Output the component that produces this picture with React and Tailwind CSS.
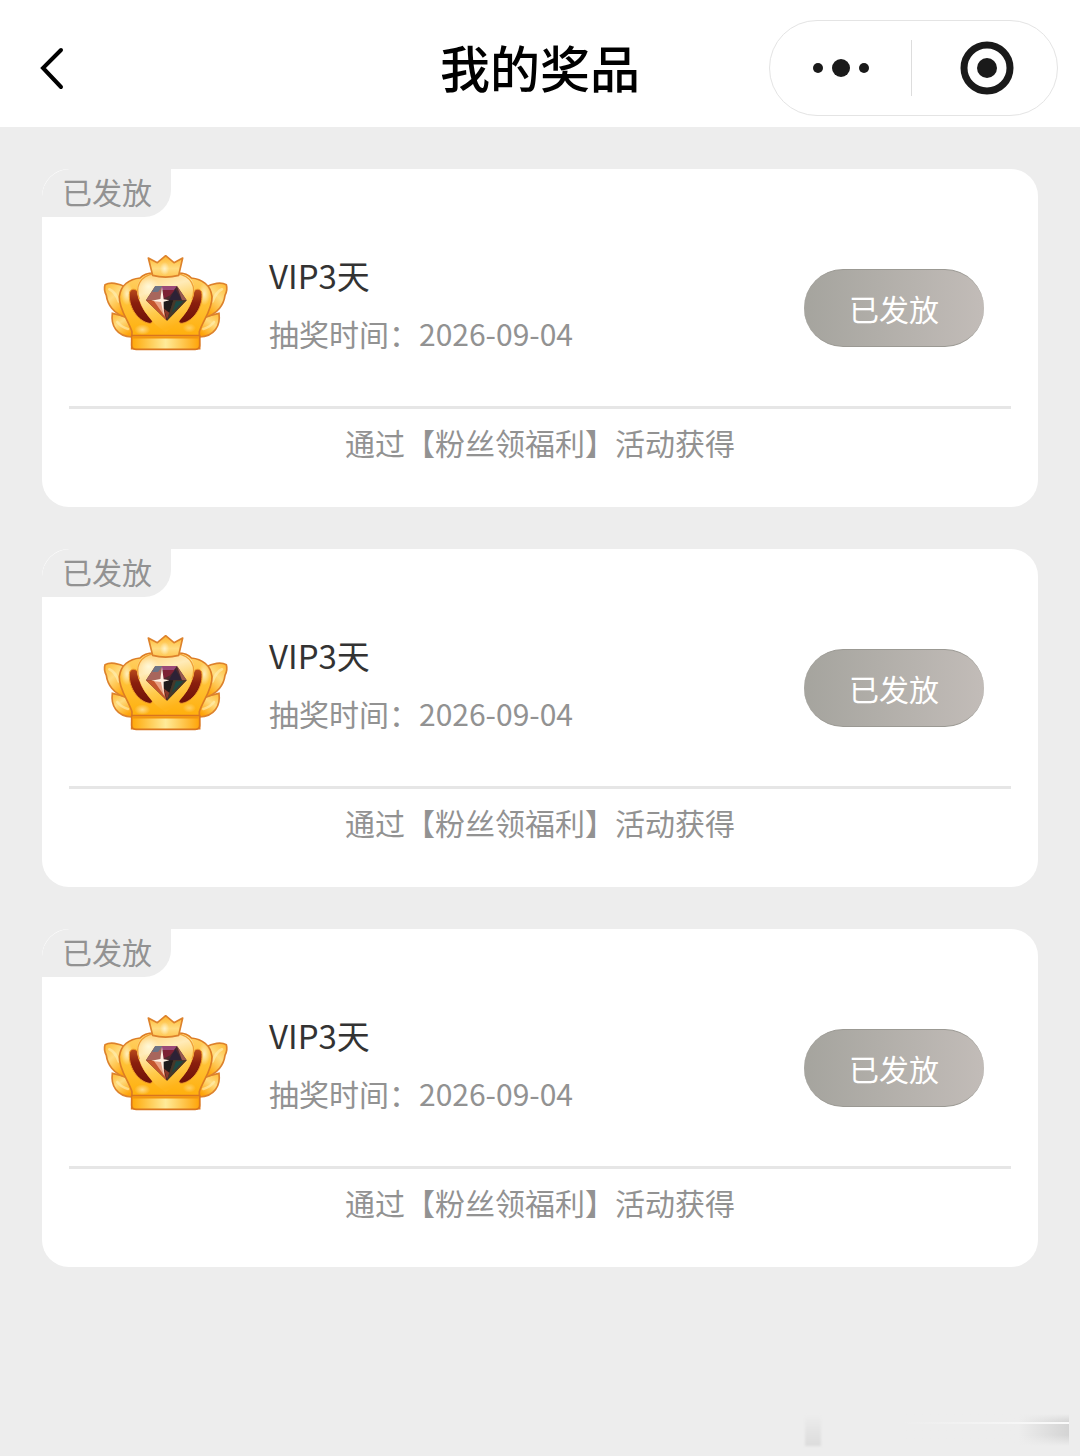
import React from "react";

const prizes = [
  { id: 1, name: "VIP3天", date: "2026-09-04", status: "已发放", source: "粉丝领福利" },
  { id: 2, name: "VIP3天", date: "2026-09-04", status: "已发放", source: "粉丝领福利" },
  { id: 3, name: "VIP3天", date: "2026-09-04", status: "已发放", source: "粉丝领福利" },
];

function CrownDefs() {
  return (
    <svg className="absolute h-0 w-0" aria-hidden="true">
      <defs>
        <linearGradient id="wing" x1="0" y1="0" x2="0.6" y2="1">
          <stop offset="0" stopColor="#ffb930" />
          <stop offset="0.45" stopColor="#ffdc80" />
          <stop offset="1" stopColor="#ffa408" />
        </linearGradient>
        <linearGradient id="tip" x1="0" y1="0" x2="0" y2="1">
          <stop offset="0" stopColor="#ffb62c" />
          <stop offset="0.6" stopColor="#ffdc80" />
          <stop offset="1" stopColor="#ffc650" />
        </linearGradient>
        <linearGradient id="body" x1="0" y1="0" x2="0" y2="1">
          <stop offset="0" stopColor="#ffd068" />
          <stop offset="0.4" stopColor="#ffc236" />
          <stop offset="0.8" stopColor="#ffb00f" />
          <stop offset="1" stopColor="#ffa90a" />
        </linearGradient>
        <linearGradient id="heart" x1="0" y1="0" x2="0.3" y2="1">
          <stop offset="0" stopColor="#ffcf70" />
          <stop offset="0.35" stopColor="#ffebb8" />
          <stop offset="0.7" stopColor="#ffcb4c" />
          <stop offset="1" stopColor="#ffb41a" />
        </linearGradient>
        <linearGradient id="base" x1="0" y1="0" x2="1" y2="0">
          <stop offset="0" stopColor="#ffa807" />
          <stop offset="0.5" stopColor="#ffeb98" />
          <stop offset="1" stopColor="#ffa407" />
        </linearGradient>
        <linearGradient id="slot" x1="0" y1="0" x2="0" y2="1">
          <stop offset="0" stopColor="#b84a1c" />
          <stop offset="0.4" stopColor="#8a1f0d" />
          <stop offset="1" stopColor="#6e1208" />
        </linearGradient>
        <radialGradient id="glow">
          <stop offset="0" stopColor="#fff8d8" />
          <stop offset="1" stopColor="#fff8d8" stopOpacity="0" />
        </radialGradient>
      </defs>
    </svg>
  );
}

function Wing() {
  return (
    <>
      <path d="M67 220 C62 256 80 290 126 291 L130 235 Z" fill="url(#wing)" stroke="#dd822c" strokeWidth="5" />
      <path d="M45 134 C60 126 86 129 108 142 L114 234 C68 222 52 190 49 166 C43 154 42 144 45 134 Z" fill="url(#wing)" stroke="#dd822c" strokeWidth="5" strokeLinejoin="round" />
      <path d="M58 148 C72 154 80 168 86 184" fill="none" stroke="#fff0b8" strokeWidth="8" strokeLinecap="round" opacity="0.6" />
      <path d="M82 246 C90 256 102 264 114 267" fill="none" stroke="#fff0b4" strokeWidth="8" strokeLinecap="round" opacity="0.6" />
    </>
  );
}

function Slot() {
  return (
    <path d="M119 156 C112 196 142 244 178 250 C187 250 190 243 185 236 C162 216 149 192 143 156 C139 146 124 144 119 156 Z" fill="url(#slot)" stroke="#ef9a28" strokeWidth="3" />
  );
}

function Crown() {
  return (
    <svg className="h-24 w-32 shrink-0" viewBox="36 45 384 288" role="img" aria-label="VIP皇冠">
      <Wing />
      <g transform="translate(454 0) scale(-1 1)"><Wing /></g>
      <path d="M125 326 L126 276 C118 246 86 208 88 170 C92 136 118 117 150 114 C158 105 174 99 192 99 L263 99 C281 99 297 105 304 114 C336 117 362 136 366 170 C368 208 336 246 328 276 L329 326 Z" fill="url(#body)" stroke="#dc7c24" strokeWidth="5" />
      <ellipse cx="111" cy="162" rx="18" ry="34" fill="url(#glow)" opacity="0.8" />
      <ellipse cx="343" cy="162" rx="18" ry="34" fill="url(#glow)" opacity="0.8" />
      <Slot />
      <g transform="translate(454 0) scale(-1 1)"><Slot /></g>
      <path d="M227 276 C188 254 154 212 142 160 C136 118 165 101 193 101 L262 101 C290 101 318 118 312 160 C300 212 266 254 227 276 Z" fill="url(#heart)" />
      <path d="M148 178 C134 140 150 108 192 101 M306 178 C320 140 304 108 262 101" fill="none" stroke="#f0a034" strokeWidth="4" />
      <ellipse cx="176" cy="140" rx="30" ry="28" fill="url(#glow)" />
      <ellipse cx="157" cy="269" rx="24" ry="16" fill="url(#glow)" opacity="0.6" />
      <ellipse cx="298" cy="264" rx="20" ry="14" fill="url(#glow)" opacity="0.4" />
      <path d="M175 54 L202 68 L227 47 L252 68 L278 54 L266 106 C240 113 213 113 188 106 Z" fill="url(#tip)" stroke="#dd822c" strokeWidth="5" strokeLinejoin="round" />
      <ellipse cx="224" cy="86" rx="14" ry="20" fill="url(#glow)" opacity="0.8" />
      <path d="M196 138 L261 138 L290 181 L231 242 L168 181 Z" fill="#4b2a2c" />
      <path d="M196 138 L218 138 L211 181 L168 181 Z" fill="#a8665c" />
      <path d="M196 138 L218 138 L204 156 L186 156 Z" fill="#6d7486" />
      <path d="M216 138 L261 138 L252 150 L214 150 Z" fill="#9a4a78" />
      <path d="M218 150 L256 150 L240 166 L218 178 Z" fill="#7c2234" />
      <path d="M256 146 L276 181 L236 181 Z" fill="#2c2236" />
      <path d="M261 138 L290 181 L276 181 Z" fill="#9a5a50" />
      <path d="M168 181 L216 181 L229 240 Z" fill="#c4562e" />
      <path d="M192 183 L214 181 L225 230 Z" fill="#e8a184" />
      <path d="M216 181 L250 181 L231 242 Z" fill="#1f1c1c" />
      <path d="M250 181 L290 181 L231 242 Z" fill="#463829" />
      <path d="M258 184 L280 184 L246 218 Z" fill="#1d4a45" />
      <path d="M222 206 L238 218 L231 240 Z" fill="#8a3a2c" />
      <path d="M184 182 L211 177 L216 140 L221 178 L238 181 L221 185 L221 226 L213 186 Z" fill="#fff2e4" />
      <path d="M125 287 H329 V316 Q329 328 316 328 H138 Q125 328 125 316 Z" fill="url(#base)" stroke="#d9761f" strokeWidth="5" />
      <path d="M128 292 H326" stroke="#f3960f" strokeWidth="7" />
    </svg>
  );
}

function PrizeCard({ prize }) {
  return (
    <li className="overflow-hidden rounded-[27px] bg-white pb-[42px]">
      <div className="flex">
        <span className="flex h-12 items-center rounded-tl-[28px] rounded-br-[27px] bg-[#ededed] pr-[19px] pb-1 pl-5 text-[30px] leading-none text-[#929292]">
          {prize.status}
        </span>
      </div>
      <div className="flex items-start pr-[54px] pl-[60px]">
        <div className="pt-[38px]">
          <Crown />
        </div>
        <div className="ml-[39px] min-w-0 flex-1 pt-[34px]">
          <h2 className="text-[33px] leading-[48px] text-[#333333]">{prize.name}</h2>
          <p className="mt-[7px] text-[30px] leading-[54px] text-[#929292]">
            抽奖时间：<time dateTime={prize.date}>{prize.date}</time>
          </p>
        </div>
        <button
          type="button"
          className="mt-[52px] h-[78px] w-[180px] shrink-0 rounded-full border-y border-[#9b9993] bg-linear-to-r from-[#a5a49e] to-[#c2bcb8] bg-origin-border text-[30px] leading-none text-white"
        >
          {prize.status}
        </button>
      </div>
      <p className="mx-[27px] mt-[46px] border-t-3 border-[#e6e6e6] pt-2.5 text-center text-[30px] leading-[46px] text-[#929292]">
        通过【{prize.source}】活动获得
      </p>
    </li>
  );
}

export default function App() {
  return (
    <div className="flex min-h-screen flex-col bg-[#ededed] font-['Noto_Sans_CJK_SC',sans-serif]">
      <CrownDefs />
      <header className="grid h-[127px] grid-cols-[1fr_auto_1fr] items-center bg-white px-[22px] pt-2">
        <button type="button" aria-label="返回" className="ml-1.5 flex h-16 w-12 items-center justify-center">
          <svg className="h-12 w-8" viewBox="0 0 32 48" fill="none" stroke="#000" strokeWidth="4" strokeLinecap="round" strokeLinejoin="miter">
            <path d="M25 6 L7 24 L25 43" />
          </svg>
        </button>
        <h1 className="pb-1 text-[50px] leading-[72px] font-medium text-black">我的奖品</h1>
        <div className="flex h-24 w-[289px] items-center justify-self-end rounded-full border border-[#e4e4e4]">
          <button type="button" aria-label="更多" className="flex h-full flex-1 items-center justify-center">
            <svg className="h-5 w-14" viewBox="0 0 56 20" fill="#1a1a1a">
              <circle cx="5" cy="10" r="5" />
              <circle cx="28" cy="10" r="9" />
              <circle cx="51" cy="10" r="5" />
            </svg>
          </button>
          <span className="h-14 w-px bg-[#dddddd]" />
          <button type="button" aria-label="关闭" className="flex h-full flex-1 items-center justify-center pl-1">
            <svg className="h-[54px] w-[54px]" viewBox="0 0 54 54">
              <circle cx="27" cy="27" r="23" fill="none" stroke="#1a1a1a" strokeWidth="7" />
              <circle cx="27" cy="27" r="10" fill="#1a1a1a" />
            </svg>
          </button>
        </div>
      </header>
      <main className="flex-1 px-[42px] pt-[42px]">
        <ul className="flex flex-col gap-[42px]">
          {prizes.map((prize) => (
            <PrizeCard key={prize.id} prize={prize} />
          ))}
        </ul>
      </main>
      <footer className="flex items-end self-end pr-[11px] pb-2.5" aria-hidden="true">
        <span className="mr-20 h-8 w-4 bg-linear-to-b from-[#ededed] to-[#dcdcdc] blur-[1px]" />
        <span className="flex h-8 w-[168px] flex-col bg-linear-to-r from-[#ededed] from-70% to-[#d4d4d4]">
          <span className="h-2 bg-linear-to-b from-[#ededed] to-transparent" />
          <span className="h-0.5 bg-linear-to-r from-[#ededed] to-[#fafafa]" />
          <span className="flex-1 bg-linear-to-b from-transparent from-50% to-[#ededed]" />
        </span>
      </footer>
    </div>
  );
}
